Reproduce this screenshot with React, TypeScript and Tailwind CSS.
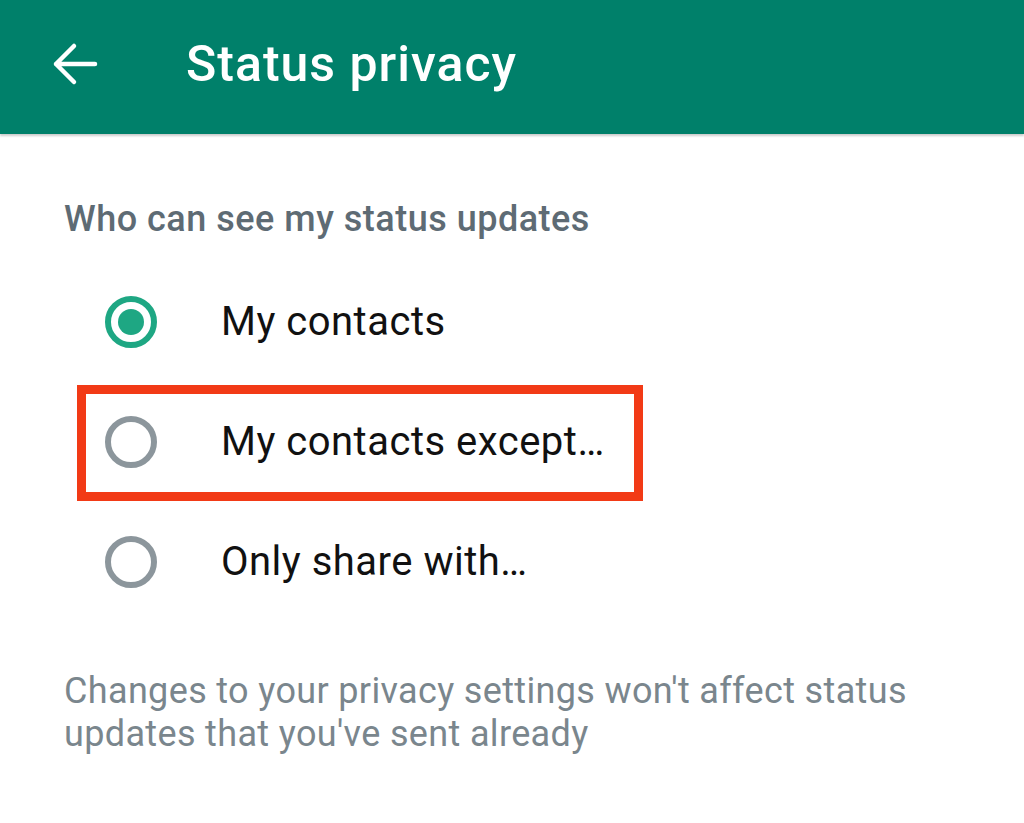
import React from "react";

function Radio({ checked }: { checked?: boolean }) {
  return (
    <div
      className={`flex h-[52px] w-[52px] items-center justify-center rounded-full border-[6px] ${
        checked ? "border-[#1ea783]" : "border-[#8c969c]"
      }`}
    >
      {checked && <div className="h-[26px] w-[26px] rounded-full bg-[#1ea783]" />}
    </div>
  );
}

function Option({ label, checked, highlighted }: { label: string; checked?: boolean; highlighted?: boolean }) {
  return (
    <div className="relative flex h-[120px] items-center">
      <div className="ml-[105px] w-[116px]">
        <Radio checked={checked} />
      </div>
      <span className="text-[40px] leading-none tracking-[0.5px] text-[#111]">{label}</span>
      {highlighted && (
        <div className="pointer-events-none absolute left-[77px] top-[3px] h-[116px] w-[566px] border-[9px] border-[#f23a16]" />
      )}
    </div>
  );
}

export default function App() {
  return (
    <div
      className="h-[823px] w-[1024px] overflow-hidden bg-white"
      style={{ fontFamily: "Roboto, 'Noto Sans', sans-serif" }}
    >
      <header className="flex h-[134px] items-center bg-[#00806a] pb-[6px] shadow-[0_2px_2px_rgba(0,0,0,0.2)]">
        <svg className="ml-[52px] h-[46px] w-[46px]" viewBox="0 0 46 46" fill="none">
          <path d="M43 23H4M22 5L4 23l18 18" stroke="white" strokeWidth="4.5" strokeLinecap="round" strokeLinejoin="round" />
        </svg>
        <h1 className="ml-[88px] text-[50px] font-medium leading-none tracking-[1px] text-white">Status privacy</h1>
      </header>
      <div className="pt-[67px]">
        <div className="pl-[64px] text-[36px] font-medium leading-none tracking-[0.5px] text-[#5e6b74]">
          Who can see my status updates
        </div>
        <div className="mt-[25px]">
          <Option label="My contacts" checked />
          <Option label="My contacts except…" highlighted />
          <Option label="Only share with…" />
        </div>
        <p className="mt-[48px] pl-[64px] pr-[40px] text-[36px] leading-[43px] tracking-[0.35px] text-[#7a868d]">
          Changes to your privacy settings won't affect status updates that you've sent already
        </p>
      </div>
    </div>
  );
}
